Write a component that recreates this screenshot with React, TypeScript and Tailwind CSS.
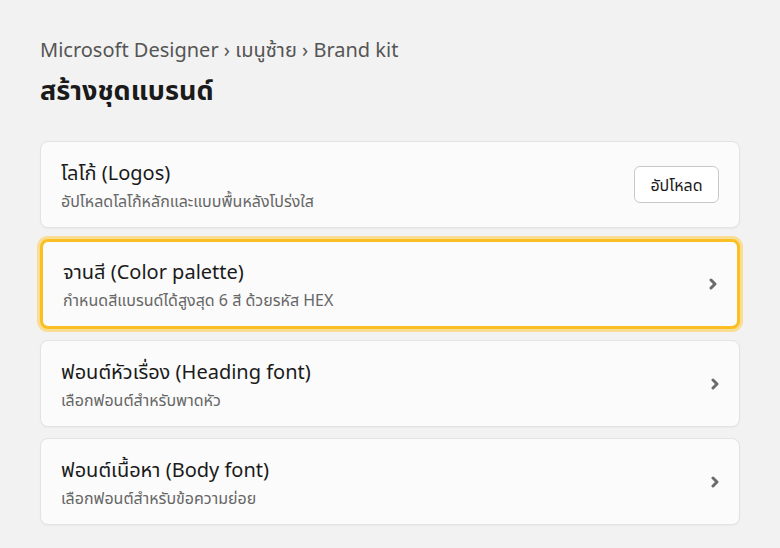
import React from "react";

type Item = {
  title: string;
  desc: string;
  action?: "upload" | "chevron";
  active?: boolean;
};

const items: Item[] = [
  { title: "โลโก้ (Logos)", desc: "อัปโหลดโลโก้หลักและแบบพื้นหลังโปร่งใส", action: "upload" },
  { title: "จานสี (Color palette)", desc: "กำหนดสีแบรนด์ได้สูงสุด 6 สี ด้วยรหัส HEX", action: "chevron", active: true },
  { title: "ฟอนต์หัวเรื่อง (Heading font)", desc: "เลือกฟอนต์สำหรับพาดหัว", action: "chevron" },
  { title: "ฟอนต์เนื้อหา (Body font)", desc: "เลือกฟอนต์สำหรับข้อความย่อย", action: "chevron" },
];

function Chevron() {
  return (
    <svg width="12" height="12" viewBox="0 0 12 12" className="text-[#6b6b6b]">
      <path d="M4 2 L8 6 L4 10" fill="none" stroke="currentColor" strokeWidth="3" strokeLinecap="round" strokeLinejoin="round" />
    </svg>
  );
}

function Card({ item }: { item: Item }) {
  const base = "flex items-center justify-between rounded-lg bg-[#fbfbfb] pl-5 pr-5";
  const cls = item.active
    ? `${base} h-[90px] border-[3px] border-[#fbbf24] shadow-[0_0_0_3px_#f8dd93]`
    : `${base} h-[87px] border border-[#e3e3e3] shadow-[0_1px_2px_rgba(0,0,0,0.04)]`;
  return (
    <div className={cls}>
      <div className="flex flex-col gap-[4px] pt-[2px]">
        <div className="text-[20px] leading-[26px] text-[#1a1a1a]">{item.title}</div>
        <div className="text-[16px] leading-[22px] text-[#666666]">{item.desc}</div>
      </div>
      {item.action === "upload" ? (
        <button className="h-[37px] w-[85px] rounded-md border border-[#c9c9c9] bg-white text-[16px] text-[#1a1a1a]">
          อัปโหลด
        </button>
      ) : (
        <div className="-mr-[2px] flex items-center">
          <Chevron />
        </div>
      )}
    </div>
  );
}

export default function App() {
  return (
    <div
      className="min-h-[548px] w-full bg-[#f2f2f2] px-10 pt-[36px]"
      style={{ fontFamily: '"Noto Sans", "Noto Sans Thai", sans-serif' }}
    >
      <div className="text-[20px] leading-[28px] text-[#555555]">
        Microsoft Designer › เมนูซ้าย › Brand kit
      </div>
      <h1 className="mt-[8px] text-[27px] font-bold leading-[36px] text-[#1a1a1a]">สร้างชุดแบรนด์</h1>
      <div className="mt-[33px] flex w-[700px] flex-col gap-[11px]">
        {items.map((it) => (
          <Card key={it.title} item={it} />
        ))}
      </div>
    </div>
  );
}
